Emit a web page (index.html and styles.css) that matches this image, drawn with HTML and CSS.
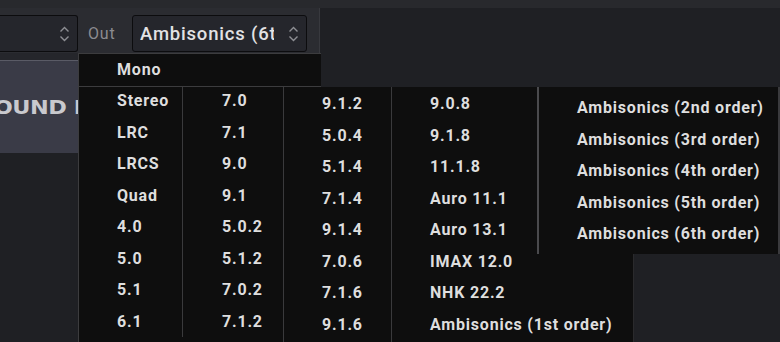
FILE: index.html
```html
<!DOCTYPE html>
<html>
<head>
<meta charset="utf-8">
<link rel="stylesheet" href="styles.css">
</head>
<body>
  <div class="topstrip"></div>
  <div class="header">
    <div class="select select_in">
      <svg class="chev" width="11" height="16" viewBox="0 0 11 16"><path d="M1.5 5.5 L5.5 1.5 L9.5 5.5 M1.5 10.5 L5.5 14.5 L9.5 10.5" fill="none" stroke="#8e8f94" stroke-width="1.4"/></svg>
    </div>
    <span class="label">Out</span>
    <div class="select select_out">
      <span class="select_text">Ambisonics (6th order)</span>
      <svg class="chev" width="11" height="16" viewBox="0 0 11 16"><path d="M1.5 5.5 L5.5 1.5 L9.5 5.5 M1.5 10.5 L5.5 14.5 L9.5 10.5" fill="none" stroke="#8e8f94" stroke-width="1.4"/></svg>
    </div>
  </div>
  <div class="gap_strip"></div>
  <div class="logo_panel">
    <span class="logo">SOUND I</span>
  </div>

  <!-- menu de formatos -->
  <div class="menu">
    <div class="menu_top">
      <div class="item">Mono</div>
    </div>
    <div class="submenu">
      <div class="col col1">
        <div class="item">Stereo</div>
        <div class="item">LRC</div>
        <div class="item">LRCS</div>
        <div class="item">Quad</div>
        <div class="item">4.0</div>
        <div class="item">5.0</div>
        <div class="item">5.1</div>
        <div class="item">6.1</div>
      </div>
      <div class="col col2">
        <div class="item">7.0</div>
        <div class="item">7.1</div>
        <div class="item">9.0</div>
        <div class="item">9.1</div>
        <div class="item">5.0.2</div>
        <div class="item">5.1.2</div>
        <div class="item">7.0.2</div>
        <div class="item">7.1.2</div>
      </div>
      <div class="col col3">
        <div class="item">9.1.2</div>
        <div class="item">5.0.4</div>
        <div class="item">5.1.4</div>
        <div class="item">7.1.4</div>
        <div class="item">9.1.4</div>
        <div class="item">7.0.6</div>
        <div class="item">7.1.6</div>
        <div class="item">9.1.6</div>
      </div>
      <div class="col col4">
        <div class="item">9.0.8</div>
        <div class="item">9.1.8</div>
        <div class="item">11.1.8</div>
        <div class="item">Auro 11.1</div>
        <div class="item">Auro 13.1</div>
        <div class="item">IMAX 12.0</div>
        <div class="item">NHK 22.2</div>
        <div class="item">Ambisonics (1st order)</div>
      </div>
      <div class="col col5">
        <div class="item">Ambisonics (2nd order)</div>
        <div class="item">Ambisonics (3rd order)</div>
        <div class="item">Ambisonics (4th order)</div>
        <div class="item">Ambisonics (5th order)</div>
        <div class="item">Ambisonics (6th order)</div>
      </div>
    </div>
  </div>
</body>
</html>
```
FILE: styles.css
```css
body{
    margin: 0;
    background-color: #1f2024;
    font-family: Roboto, "Liberation Sans", sans-serif;
    width: 780px;
    height: 342px;
    overflow: hidden;
    position: relative;
}

.topstrip{
    height: 8px;
    background-color: #28292d;
}

.header{
    width: 320px;
    height: 45px;
    box-sizing: border-box;
    padding-top: 7px;
    background-color: #2b2c31;
    border-right: 1px solid #38393e;
    display: flex;
    align-items: flex-start;
}

.select{
    height: 37px;
    box-sizing: border-box;
    background-color: #25262c;
    border: 1.5px solid #0c0c0e;
    border-radius: 3px;
    display: flex;
    align-items: center;
    overflow: hidden;
}

.select_in{
    width: 78px;
    border-left: none;
    border-radius: 0 3px 3px 0;
    justify-content: flex-end;
    padding-right: 7px;
}

.select_out{
    width: 175px;
    padding-left: 7px;
    padding-right: 7px;
}

.select_text{
    flex: 1;
    margin-right: 14px;
    white-space: nowrap;
    overflow: hidden;
    color: #e2e2e4;
    font-size: 18.5px;
    font-weight: 500;
    letter-spacing: 0.8px;
}

.chev{
    flex-shrink: 0;
}

.label{
    margin: 0 11px 0 10px;
    width: 33px;
    line-height: 37px;
    color: #8b8b90;
    font-size: 16px;
    letter-spacing: 0.8px;
}

.gap_strip{
    height: 7px;
    width: 78px;
    background-color: #25262b;
}

.logo_panel{
    width: 78px;
    height: 93px;
    box-sizing: border-box;
    background-color: #3a3b47;
    border-top: 1px solid #5a5b66;
    overflow: hidden;
    white-space: nowrap;
    padding-top: 34px;
}

.logo{
    display: inline-block;
    margin-left: -22px;
    font-family: "DejaVu Sans", sans-serif;
    font-weight: bold;
    font-size: 20px;
    letter-spacing: -0.4px;
    color: #c9c9ce;
    transform: scaleX(1.12);
    transform-origin: left;
}

/* menu */
.menu{
    position: absolute;
    left: 78px;
    top: 53px;
    color: #dedede;
    font-size: 16px;
    font-weight: bold;
    letter-spacing: 0.8px;
}

.item{
    height: 31.5px;
    line-height: 28.5px;
    padding-left: 38px;
    white-space: nowrap;
}

.menu_top{
    width: 243px;
    height: 34px;
    box-sizing: border-box;
    background-color: #0e0e0e;
    border: 1px solid #3c3c3e;
    border-right: none;
}

.menu_top .item{
    height: 33px;
    line-height: 31px;
}

.submenu{
    display: flex;
    align-items: flex-start;
    background-color: #0e0e0e;
    border-left: 1px solid #3c3c3e;
    height: 260px;
    position: relative;
}

.col{
    background-color: #0e0e0e;
    box-sizing: border-box;
}

.col1{
    width: 104px;
    height: 250px;
    border-right: 1px solid #3a3a3c;
}

.col2{
    width: 100px;
    height: 260px;
}

.col2 .item{
    padding-left: 39px;
}

.col3{
    width: 108px;
    height: 260px;
    border-left: 1px solid #3a3a3c;
    padding-top: 3px;
}

.col4{
    width: 243px;
    height: 260px;
    border-left: 1px solid #3a3a3c;
    border-right: 1px solid #2a2a2c;
    padding-top: 3px;
}

.col5{
    position: absolute;
    left: 458px;
    top: 0;
    width: 243px;
    height: 167px;
    border-left: 2px solid #4a4a4d;
    border-right: 2px solid #3a3a3d;
    padding-top: 7px;
}
```
